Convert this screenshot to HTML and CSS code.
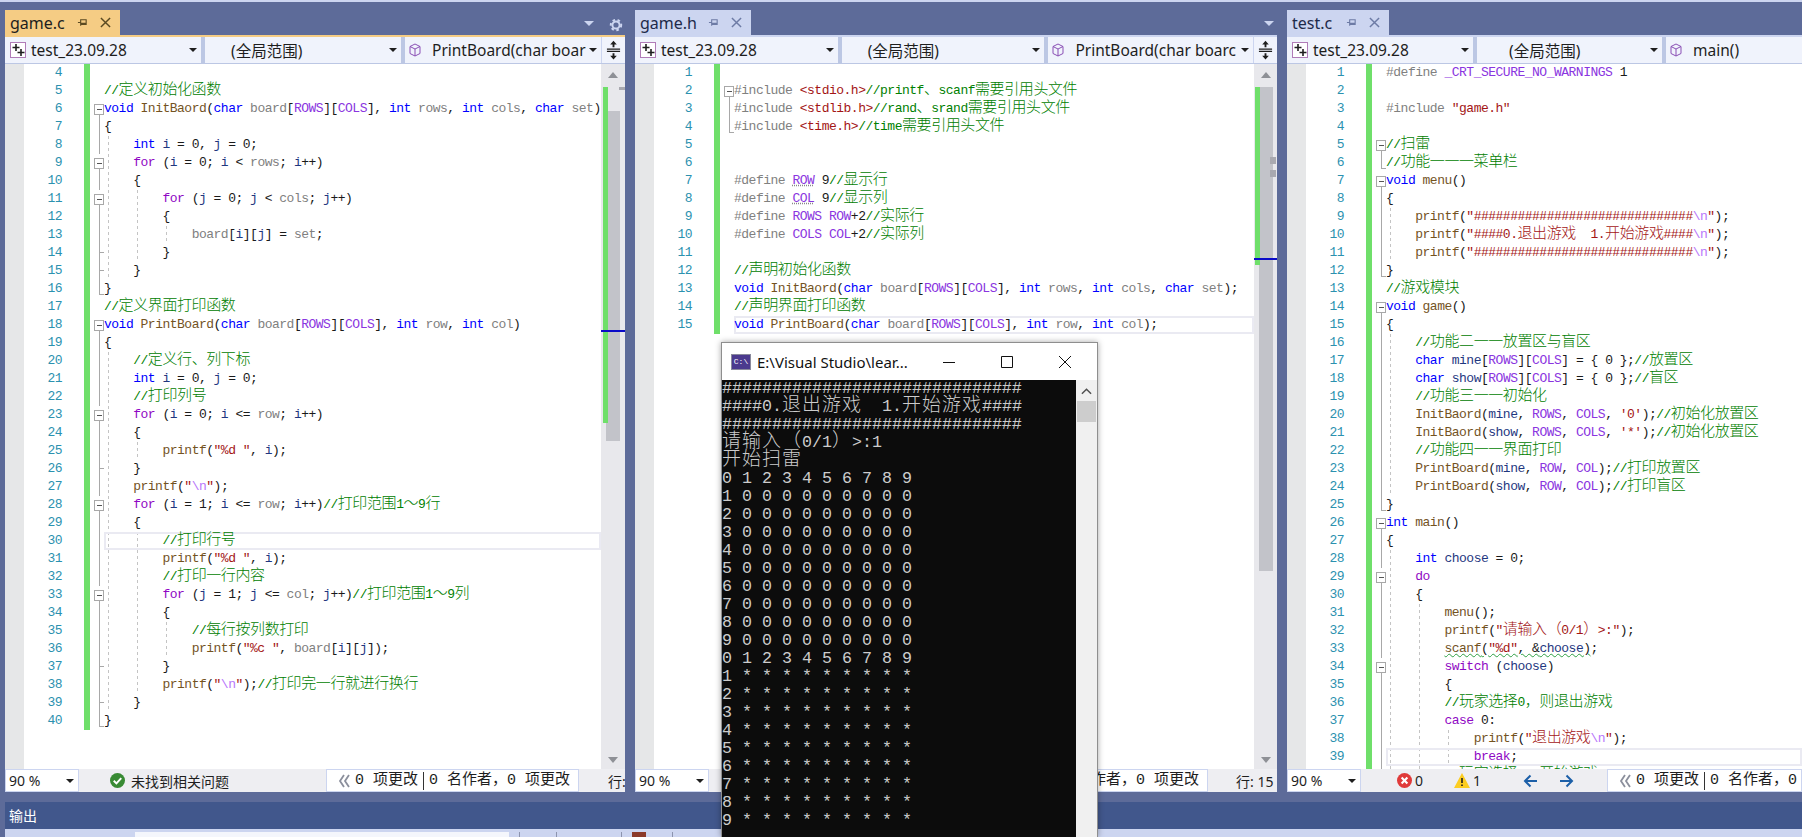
FILE: index.html
```html
<!DOCTYPE html>
<html lang="zh-CN">
<head>
  <meta charset="UTF-8" />
  <title>test_23.09.28 - Microsoft Visual Studio</title>
  <link rel="stylesheet" href="styles.css">
</head>
<body>
  <div class="top-line"></div>

  <div class="workspace">

    <!-- game.c -->
    <section class="pane pane-a">
      <div class="tabstrip">
        <div class="tab active">
          <span class="tab-name">game.c</span>
          <svg class="pin" viewBox="0 0 12 12"><path d="M1 6h3M4 2.5v7M4 3h6v5H4M4 7h6" /></svg>
          <svg class="close" viewBox="0 0 12 12"><path d="M1 1l10 10M11 1L1 11" /></svg>
        </div>
        <span class="strip-drop"></span>
        <svg class="gear" viewBox="0 0 14 14"><circle cx="7" cy="7" r="3.6" /><circle class="teeth" cx="7" cy="7" r="5.2" /></svg>
      </div>
      <div class="navbar">
        <div class="combo combo-a">
          <svg class="proj" viewBox="0 0 16 16"><rect x="0.5" y="0.5" width="15" height="15" /><path d="M6 2v7M2.5 5.5h7M11 7v7M7.5 10.500h7" /></svg>
          <span>test_23.09.28</span><i class="drop"></i>
        </div>
        <div class="combo combo-b"><span>(全局范围)</span><i class="drop"></i></div>
        <div class="combo combo-c">
          <svg class="cube" viewBox="0 0 14 14"><path d="M7 1l5 2.5v7L7 13l-5-2.5v-7zM2 3.5L7 6l5-2.5M7 6v7" /></svg>
          <span>PrintBoard(char boar</span><i class="drop"></i>
        </div>
        <div class="split">
          <svg viewBox="0 0 16 20"><path class="rule" d="M1 9h14M1 11.500h14" /><path d="M8 0l3.500 4h-2.500v3h-2V4H4.500zM8 20l3.500-4h-2.500v-2.500h-2V16H4.500z" /></svg>
        </div>
      </div>
      <div class="editor">
        <div class="lines">
          <div class="row"><span class="num">4</span><span class="bar"></span><span class="fold"></span><code class="code"></code></div>
          <div class="row"><span class="num">5</span><span class="bar"></span><span class="fold"></span><code class="code"><span class="c">//<i class="h">定义初始化函数</i></span></code></div>
          <div class="row"><span class="num">6</span><span class="bar"></span><span class="fold open"></span><code class="code"><span class="k">void</span> <span class="f">InitBaord</span>(<span class="k">char</span> <span class="a">board</span>[<span class="m">ROWS</span>][<span class="m">COLS</span>], <span class="k">int</span> <span class="a">rows</span>, <span class="k">int</span> <span class="a">cols</span>, <span class="k">char</span> <span class="a">set</span>)</code></div>
          <div class="row"><span class="num">7</span><span class="bar"></span><span class="fold line"></span><code class="code">{</code></div>
          <div class="row"><span class="num">8</span><span class="bar"></span><span class="fold line"></span><code class="code g1">    <span class="k">int</span> <span class="v">i</span> = 0, <span class="v">j</span> = 0;</code></div>
          <div class="row"><span class="num">9</span><span class="bar"></span><span class="fold open"></span><code class="code g1">    <span class="q">for</span> (<span class="v">i</span> = 0; <span class="v">i</span> &lt; <span class="a">rows</span>; <span class="v">i</span>++)</code></div>
          <div class="row"><span class="num">10</span><span class="bar"></span><span class="fold line"></span><code class="code g1">    {</code></div>
          <div class="row"><span class="num">11</span><span class="bar"></span><span class="fold open"></span><code class="code g2">        <span class="q">for</span> (<span class="v">j</span> = 0; <span class="v">j</span> &lt; <span class="a">cols</span>; <span class="v">j</span>++)</code></div>
          <div class="row"><span class="num">12</span><span class="bar"></span><span class="fold line"></span><code class="code g2">        {</code></div>
          <div class="row"><span class="num">13</span><span class="bar"></span><span class="fold line"></span><code class="code g3">            <span class="a">board</span>[<span class="v">i</span>][<span class="v">j</span>] = <span class="a">set</span>;</code></div>
          <div class="row"><span class="num">14</span><span class="bar"></span><span class="fold tick"></span><code class="code g2">        }</code></div>
          <div class="row"><span class="num">15</span><span class="bar"></span><span class="fold tick"></span><code class="code g1">    }</code></div>
          <div class="row"><span class="num">16</span><span class="bar"></span><span class="fold end"></span><code class="code">}</code></div>
          <div class="row"><span class="num">17</span><span class="bar"></span><span class="fold"></span><code class="code"><span class="c">//<i class="h">定义界面打印函数</i></span></code></div>
          <div class="row"><span class="num">18</span><span class="bar"></span><span class="fold open"></span><code class="code"><span class="k">void</span> <span class="f">PrintBoard</span>(<span class="k">char</span> <span class="a">board</span>[<span class="m">ROWS</span>][<span class="m">COLS</span>], <span class="k">int</span> <span class="a">row</span>, <span class="k">int</span> <span class="a">col</span>)</code></div>
          <div class="row"><span class="num">19</span><span class="bar"></span><span class="fold line"></span><code class="code">{</code></div>
          <div class="row"><span class="num">20</span><span class="bar"></span><span class="fold line"></span><code class="code g1">    <span class="c">//<i class="h">定义行、列下标</i></span></code></div>
          <div class="row"><span class="num">21</span><span class="bar"></span><span class="fold line"></span><code class="code g1">    <span class="k">int</span> <span class="v">i</span> = 0, <span class="v">j</span> = 0;</code></div>
          <div class="row"><span class="num">22</span><span class="bar"></span><span class="fold line"></span><code class="code g1">    <span class="c">//<i class="h">打印列号</i></span></code></div>
          <div class="row"><span class="num">23</span><span class="bar"></span><span class="fold open"></span><code class="code g1">    <span class="q">for</span> (<span class="v">i</span> = 0; <span class="v">i</span> &lt;= <span class="a">row</span>; <span class="v">i</span>++)</code></div>
          <div class="row"><span class="num">24</span><span class="bar"></span><span class="fold line"></span><code class="code g1">    {</code></div>
          <div class="row"><span class="num">25</span><span class="bar"></span><span class="fold line"></span><code class="code g2">        <span class="f">printf</span>(<span class="s">"%d "</span>, <span class="v">i</span>);</code></div>
          <div class="row"><span class="num">26</span><span class="bar"></span><span class="fold tick"></span><code class="code g1">    }</code></div>
          <div class="row"><span class="num">27</span><span class="bar"></span><span class="fold line"></span><code class="code g1">    <span class="f">printf</span>(<span class="s">"</span><span class="e">\n</span><span class="s">"</span>);</code></div>
          <div class="row"><span class="num">28</span><span class="bar"></span><span class="fold open"></span><code class="code g1">    <span class="q">for</span> (<span class="v">i</span> = 1; <span class="v">i</span> &lt;= <span class="a">row</span>; <span class="v">i</span>++)<span class="c">//<i class="h">打印范围</i>1<i class="h">～</i>9<i class="h">行</i></span></code></div>
          <div class="row"><span class="num">29</span><span class="bar"></span><span class="fold line"></span><code class="code g1">    {</code></div>
          <div class="row"><span class="num">30</span><span class="bar"></span><span class="fold line"></span><code class="code g2 cur">        <span class="c">//<i class="h">打印行号</i></span></code></div>
          <div class="row"><span class="num">31</span><span class="bar"></span><span class="fold line"></span><code class="code g2">        <span class="f">printf</span>(<span class="s">"%d "</span>, <span class="v">i</span>);</code></div>
          <div class="row"><span class="num">32</span><span class="bar"></span><span class="fold line"></span><code class="code g2">        <span class="c">//<i class="h">打印一行内容</i></span></code></div>
          <div class="row"><span class="num">33</span><span class="bar"></span><span class="fold open"></span><code class="code g2">        <span class="q">for</span> (<span class="v">j</span> = 1; <span class="v">j</span> &lt;= <span class="a">col</span>; <span class="v">j</span>++)<span class="c">//<i class="h">打印范围</i>1<i class="h">～</i>9<i class="h">列</i></span></code></div>
          <div class="row"><span class="num">34</span><span class="bar"></span><span class="fold line"></span><code class="code g2">        {</code></div>
          <div class="row"><span class="num">35</span><span class="bar"></span><span class="fold line"></span><code class="code g3">            <span class="c">//<i class="h">每行按列数打印</i></span></code></div>
          <div class="row"><span class="num">36</span><span class="bar"></span><span class="fold line"></span><code class="code g3">            <span class="f">printf</span>(<span class="s">"%c "</span>, <span class="a">board</span>[<span class="v">i</span>][<span class="v">j</span>]);</code></div>
          <div class="row"><span class="num">37</span><span class="bar"></span><span class="fold tick"></span><code class="code g2">        }</code></div>
          <div class="row"><span class="num">38</span><span class="bar"></span><span class="fold line"></span><code class="code g2">        <span class="f">printf</span>(<span class="s">"</span><span class="e">\n</span><span class="s">"</span>);<span class="c">//<i class="h">打印完一行就进行换行</i></span></code></div>
          <div class="row"><span class="num">39</span><span class="bar"></span><span class="fold tick"></span><code class="code g1">    }</code></div>
          <div class="row"><span class="num">40</span><span class="bar"></span><span class="fold end"></span><code class="code">}</code></div>
        </div>
        <div class="sbar">
          <i class="arrow-up"></i>
          <div class="track"><div class="thumb thumb-a"></div></div>
          <i class="arrow-down"></i>
          <span class="map map-a"></span>
          <span class="caret caret-a"></span>
          <span class="mark mark-a"></span>
        </div>
      </div>
      <div class="status">
        <div class="zoom-box">90 %<i class="drop"></i></div>
        <svg class="st-check" viewBox="0 0 14 14"><circle cx="7" cy="7" r="7" /><path d="M3.5 7.200l2.500 2.500 4.500-5" /></svg>
        <span class="st-msg">未找到相关问题</span>
        <div class="changes changes-a"><svg class="chev" viewBox="0 0 12 14"><path d="M6 1L2 7l4 6M11 1L7 7l4 6" /></svg><span>0 项更改</span><b></b><span>0 名作者，0 项更改</span></div>
        <span class="st-line st-line-a">行: 15</span>
      </div>
    </section>

    <!-- game.h -->
    <section class="pane pane-b">
      <div class="tabstrip">
        <div class="tab">
          <span class="tab-name">game.h</span>
          <svg class="pin" viewBox="0 0 12 12"><path d="M1 6h3M4 2.5v7M4 3h6v5H4M4 7h6" /></svg>
          <svg class="close" viewBox="0 0 12 12"><path d="M1 1l10 10M11 1L1 11" /></svg>
        </div>
        <span class="strip-drop"></span>
      </div>
      <div class="navbar">
        <div class="combo combo-d">
          <svg class="proj" viewBox="0 0 16 16"><rect x="0.5" y="0.5" width="15" height="15" /><path d="M6 2v7M2.5 5.5h7M11 7v7M7.5 10.500h7" /></svg>
          <span>test_23.09.28</span><i class="drop"></i>
        </div>
        <div class="combo combo-e"><span>(全局范围)</span><i class="drop"></i></div>
        <div class="combo combo-f">
          <svg class="cube" viewBox="0 0 14 14"><path d="M7 1l5 2.5v7L7 13l-5-2.5v-7zM2 3.5L7 6l5-2.5M7 6v7" /></svg>
          <span class="clip">PrintBoard(char boarc</span><i class="drop"></i>
        </div>
        <div class="split">
          <svg viewBox="0 0 16 20"><path class="rule" d="M1 9h14M1 11.500h14" /><path d="M8 0l3.500 4h-2.500v3h-2V4H4.500zM8 20l3.500-4h-2.500v-2.500h-2V16H4.500z" /></svg>
        </div>
      </div>
      <div class="editor">
        <div class="lines">
          <div class="row"><span class="num">1</span><span class="bar"></span><span class="fold"></span><code class="code"></code></div>
          <div class="row"><span class="num">2</span><span class="bar"></span><span class="fold open"></span><code class="code"><span class="p">#include</span> <span class="s">&lt;stdio.h&gt;</span><span class="c">//printf<i class="h">、</i>scanf<i class="h">需要引用头文件</i></span></code></div>
          <div class="row"><span class="num">3</span><span class="bar"></span><span class="fold line"></span><code class="code"><span class="p">#include</span> <span class="s">&lt;stdlib.h&gt;</span><span class="c">//rand<i class="h">、</i>srand<i class="h">需要引用头文件</i></span></code></div>
          <div class="row"><span class="num">4</span><span class="bar"></span><span class="fold end"></span><code class="code"><span class="p">#include</span> <span class="s">&lt;time.h&gt;</span><span class="c">//time<i class="h">需要引用头文件</i></span></code></div>
          <div class="row"><span class="num">5</span><span class="bar"></span><span class="fold"></span><code class="code"></code></div>
          <div class="row"><span class="num">6</span><span class="bar"></span><span class="fold"></span><code class="code"></code></div>
          <div class="row"><span class="num">7</span><span class="bar"></span><span class="fold"></span><code class="code"><span class="p">#define</span> <span class="m d">ROW</span> 9<span class="c">//<i class="h">显示行</i></span></code></div>
          <div class="row"><span class="num">8</span><span class="bar"></span><span class="fold"></span><code class="code"><span class="p">#define</span> <span class="m d">COL</span> 9<span class="c">//<i class="h">显示列</i></span></code></div>
          <div class="row"><span class="num">9</span><span class="bar"></span><span class="fold"></span><code class="code"><span class="p">#define</span> <span class="m">ROWS</span> <span class="m">ROW</span>+2<span class="c">//<i class="h">实际行</i></span></code></div>
          <div class="row"><span class="num">10</span><span class="bar"></span><span class="fold"></span><code class="code"><span class="p">#define</span> <span class="m">COLS</span> <span class="m">COL</span>+2<span class="c">//<i class="h">实际列</i></span></code></div>
          <div class="row"><span class="num">11</span><span class="bar"></span><span class="fold"></span><code class="code"></code></div>
          <div class="row"><span class="num">12</span><span class="bar"></span><span class="fold"></span><code class="code"><span class="c">//<i class="h">声明初始化函数</i></span></code></div>
          <div class="row"><span class="num">13</span><span class="bar"></span><span class="fold"></span><code class="code"><span class="k">void</span> <span class="f">InitBaord</span>(<span class="k">char</span> <span class="a">board</span>[<span class="m">ROWS</span>][<span class="m">COLS</span>], <span class="k">int</span> <span class="a">rows</span>, <span class="k">int</span> <span class="a">cols</span>, <span class="k">char</span> <span class="a">set</span>);</code></div>
          <div class="row"><span class="num">14</span><span class="bar"></span><span class="fold"></span><code class="code"><span class="c">//<i class="h">声明界面打印函数</i></span></code></div>
          <div class="row"><span class="num">15</span><span class="bar"></span><span class="fold"></span><code class="code cur"><span class="k">void</span> <span class="f">PrintBoard</span>(<span class="k">char</span> <span class="a">board</span>[<span class="m">ROWS</span>][<span class="m">COLS</span>], <span class="k">int</span> <span class="a">row</span>, <span class="k">int</span> <span class="a">col</span>);</code></div>
        </div>
        <div class="sbar">
          <i class="arrow-up"></i>
          <div class="track"><div class="thumb thumb-b"></div></div>
          <i class="arrow-down"></i>
          <span class="map map-b"></span>
          <span class="caret caret-b"></span>
          <span class="mark mark-b"></span>
          <span class="mark mark-c"></span>
        </div>
      </div>
      <div class="status">
        <div class="zoom-box">90 %<i class="drop"></i></div>
        <div class="changes changes-b"><svg class="chev" viewBox="0 0 12 14"><path d="M6 1L2 7l4 6M11 1L7 7l4 6" /></svg><span>0 项更改</span><b></b><span>0 名作者，0 项更改</span></div>
        <span class="st-line st-line-b">行: 15</span>
      </div>
    </section>

    <!-- test.c -->
    <section class="pane pane-c">
      <div class="tabstrip">
        <div class="tab">
          <span class="tab-name">test.c</span>
          <svg class="pin" viewBox="0 0 12 12"><path d="M1 6h3M4 2.5v7M4 3h6v5H4M4 7h6" /></svg>
          <svg class="close" viewBox="0 0 12 12"><path d="M1 1l10 10M11 1L1 11" /></svg>
        </div>
      </div>
      <div class="navbar">
        <div class="combo combo-g">
          <svg class="proj" viewBox="0 0 16 16"><rect x="0.5" y="0.5" width="15" height="15" /><path d="M6 2v7M2.5 5.5h7M11 7v7M7.5 10.500h7" /></svg>
          <span>test_23.09.28</span><i class="drop"></i>
        </div>
        <div class="combo combo-h"><span>(全局范围)</span><i class="drop"></i></div>
        <div class="combo combo-i">
          <svg class="cube" viewBox="0 0 14 14"><path d="M7 1l5 2.5v7L7 13l-5-2.5v-7zM2 3.5L7 6l5-2.5M7 6v7" /></svg>
          <span>main()</span>
        </div>
      </div>
      <div class="editor">
        <div class="lines">
          <div class="row"><span class="num">1</span><span class="bar"></span><span class="fold"></span><code class="code"><span class="p">#define</span> <span class="m">_CRT_SECURE_NO_WARNINGS</span> 1</code></div>
          <div class="row"><span class="num">2</span><span class="bar"></span><span class="fold"></span><code class="code"></code></div>
          <div class="row"><span class="num">3</span><span class="bar"></span><span class="fold"></span><code class="code"><span class="p">#include</span> <span class="s">"game.h"</span></code></div>
          <div class="row"><span class="num">4</span><span class="bar"></span><span class="fold"></span><code class="code"></code></div>
          <div class="row"><span class="num">5</span><span class="bar"></span><span class="fold open"></span><code class="code"><span class="c">//<i class="h">扫雷</i></span></code></div>
          <div class="row"><span class="num">6</span><span class="bar"></span><span class="fold end"></span><code class="code"><span class="c">//<i class="h">功能一一一菜单栏</i></span></code></div>
          <div class="row"><span class="num">7</span><span class="bar"></span><span class="fold open"></span><code class="code"><span class="k">void</span> <span class="f">menu</span>()</code></div>
          <div class="row"><span class="num">8</span><span class="bar"></span><span class="fold line"></span><code class="code">{</code></div>
          <div class="row"><span class="num">9</span><span class="bar"></span><span class="fold line"></span><code class="code g1">    <span class="f">printf</span>(<span class="s">"##############################</span><span class="e">\n</span><span class="s">"</span>);</code></div>
          <div class="row"><span class="num">10</span><span class="bar"></span><span class="fold line"></span><code class="code g1">    <span class="f">printf</span>(<span class="s">"####0.<i class="h">退出游戏</i>  1.<i class="h">开始游戏</i>####</span><span class="e">\n</span><span class="s">"</span>);</code></div>
          <div class="row"><span class="num">11</span><span class="bar"></span><span class="fold line"></span><code class="code g1">    <span class="f">printf</span>(<span class="s">"##############################</span><span class="e">\n</span><span class="s">"</span>);</code></div>
          <div class="row"><span class="num">12</span><span class="bar"></span><span class="fold end"></span><code class="code">}</code></div>
          <div class="row"><span class="num">13</span><span class="bar"></span><span class="fold"></span><code class="code"><span class="c">//<i class="h">游戏模块</i></span></code></div>
          <div class="row"><span class="num">14</span><span class="bar"></span><span class="fold open"></span><code class="code"><span class="k">void</span> <span class="f">game</span>()</code></div>
          <div class="row"><span class="num">15</span><span class="bar"></span><span class="fold line"></span><code class="code">{</code></div>
          <div class="row"><span class="num">16</span><span class="bar"></span><span class="fold line"></span><code class="code g1">    <span class="c">//<i class="h">功能二一一放置区与盲区</i></span></code></div>
          <div class="row"><span class="num">17</span><span class="bar"></span><span class="fold line"></span><code class="code g1">    <span class="k">char</span> <span class="v">mine</span>[<span class="m">ROWS</span>][<span class="m">COLS</span>] = { 0 };<span class="c">//<i class="h">放置区</i></span></code></div>
          <div class="row"><span class="num">18</span><span class="bar"></span><span class="fold line"></span><code class="code g1">    <span class="k">char</span> <span class="v">show</span>[<span class="m">ROWS</span>][<span class="m">COLS</span>] = { 0 };<span class="c">//<i class="h">盲区</i></span></code></div>
          <div class="row"><span class="num">19</span><span class="bar"></span><span class="fold line"></span><code class="code g1">    <span class="c">//<i class="h">功能三一一初始化</i></span></code></div>
          <div class="row"><span class="num">20</span><span class="bar"></span><span class="fold line"></span><code class="code g1">    <span class="f">InitBaord</span>(<span class="v">mine</span>, <span class="m">ROWS</span>, <span class="m">COLS</span>, <span class="s">'0'</span>);<span class="c">//<i class="h">初始化放置区</i></span></code></div>
          <div class="row"><span class="num">21</span><span class="bar"></span><span class="fold line"></span><code class="code g1">    <span class="f">InitBaord</span>(<span class="v">show</span>, <span class="m">ROWS</span>, <span class="m">COLS</span>, <span class="s">'*'</span>);<span class="c">//<i class="h">初始化放置区</i></span></code></div>
          <div class="row"><span class="num">22</span><span class="bar"></span><span class="fold line"></span><code class="code g1">    <span class="c">//<i class="h">功能四一一界面打印</i></span></code></div>
          <div class="row"><span class="num">23</span><span class="bar"></span><span class="fold line"></span><code class="code g1">    <span class="f">PrintBoard</span>(<span class="v">mine</span>, <span class="m">ROW</span>, <span class="m">COL</span>);<span class="c">//<i class="h">打印放置区</i></span></code></div>
          <div class="row"><span class="num">24</span><span class="bar"></span><span class="fold line"></span><code class="code g1">    <span class="f">PrintBoard</span>(<span class="v">show</span>, <span class="m">ROW</span>, <span class="m">COL</span>);<span class="c">//<i class="h">打印盲区</i></span></code></div>
          <div class="row"><span class="num">25</span><span class="bar"></span><span class="fold end"></span><code class="code">}</code></div>
          <div class="row"><span class="num">26</span><span class="bar"></span><span class="fold open"></span><code class="code"><span class="k">int</span> <span class="f">main</span>()</code></div>
          <div class="row"><span class="num">27</span><span class="bar"></span><span class="fold line"></span><code class="code">{</code></div>
          <div class="row"><span class="num">28</span><span class="bar"></span><span class="fold line"></span><code class="code g1">    <span class="k">int</span> <span class="v">choose</span> = 0;</code></div>
          <div class="row"><span class="num">29</span><span class="bar"></span><span class="fold open"></span><code class="code g1">    <span class="q">do</span></code></div>
          <div class="row"><span class="num">30</span><span class="bar"></span><span class="fold line"></span><code class="code g1">    {</code></div>
          <div class="row"><span class="num">31</span><span class="bar"></span><span class="fold line"></span><code class="code g2">        <span class="f">menu</span>();</code></div>
          <div class="row"><span class="num">32</span><span class="bar"></span><span class="fold line"></span><code class="code g2">        <span class="f">printf</span>(<span class="s">"<i class="h">请输入（</i>0/1<i class="h">）</i>&gt;:"</span>);</code></div>
          <div class="row"><span class="num">33</span><span class="bar"></span><span class="fold line"></span><code class="code g2">        <span class="w"><span class="f">scanf</span>(<span class="s">"%d"</span>, &amp;<span class="v">choose</span>)</span>;</code></div>
          <div class="row"><span class="num">34</span><span class="bar"></span><span class="fold open"></span><code class="code g2">        <span class="q">switch</span> (<span class="v">choose</span>)</code></div>
          <div class="row"><span class="num">35</span><span class="bar"></span><span class="fold line"></span><code class="code g2">        {</code></div>
          <div class="row"><span class="num">36</span><span class="bar"></span><span class="fold line"></span><code class="code g2">        <span class="c">//<i class="h">玩家选择</i>0<i class="h">，则退出游戏</i></span></code></div>
          <div class="row"><span class="num">37</span><span class="bar"></span><span class="fold line"></span><code class="code g2">        <span class="q">case</span> 0:</code></div>
          <div class="row"><span class="num">38</span><span class="bar"></span><span class="fold line"></span><code class="code g3">            <span class="f">printf</span>(<span class="s">"<i class="h">退出游戏</i></span><span class="e">\n</span><span class="s">"</span>);</code></div>
          <div class="row"><span class="num">39</span><span class="bar"></span><span class="fold line"></span><code class="code g3 cur">            <span class="q">break</span>;</code></div>
          <div class="row"><span class="num"></span><span class="bar"></span><span class="fold line"></span><code class="code g2">        <span class="c">//<i class="h">玩家选择</i>1<i class="h">，开始游戏</i></span></code></div>
        </div>
      </div>
      <div class="status">
        <div class="zoom-box">90 %<i class="drop"></i></div>
        <svg class="st-err" viewBox="0 0 14 14"><circle cx="7" cy="7" r="7" /><path d="M4.300 4.300l5.400 5.400M9.700 4.300L4.300 9.700" /></svg>
        <span class="st-count">0</span>
        <svg class="st-warn" viewBox="0 0 16 15"><path class="tri" d="M8 0l8 15H0z" /><path class="ex" d="M8 5v5M8 11.500v1.500" /></svg>
        <span class="st-count">1</span>
        <svg class="st-nav st-back" viewBox="0 0 15 14"><path d="M14 7H2M7.500 1.500L2 7l5.500 5.500" /></svg>
        <svg class="st-nav st-next" viewBox="0 0 15 14"><path d="M1 7h12M7.500 1.500L13 7l-5.500 5.500" /></svg>
        <div class="changes changes-c"><svg class="chev" viewBox="0 0 12 14"><path d="M6 1L2 7l4 6M11 1L7 7l4 6" /></svg><span>0 项更改</span><b></b><span>0 名作者，0</span></div>
      </div>
    </section>
  </div>

  <div class="output-head">输出</div>
  <div class="output-bar">
    <div class="output-input"></div>
    <i class="sep"></i><i class="sep"></i><i class="sep"></i><i class="clear-icon"></i><i class="sep"></i>
  </div>

  <!-- console window on top of the IDE -->
  <div class="console">
    <div class="con-title">
      <span class="con-icon">C:\</span>
      <span class="con-name">E:\Visual Studio\lear...</span>
      <svg class="con-btn con-min" viewBox="0 0 12 12"><path d="M0 6.500h12" /></svg>
      <svg class="con-btn con-max" viewBox="0 0 12 12"><path d="M.5.5h11v11H.5z" /></svg>
      <svg class="con-btn con-close" viewBox="0 0 12 12"><path d="M0 0l12 12M12 0L0 12" /></svg>
    </div>
    <div class="con-body">
      <pre class="con-text">##############################
####0.<i class="h">退出游戏</i>  1.<i class="h">开始游戏</i>####
##############################
<i class="h">请输入（</i>0/1<i class="h">）</i>&gt;:1
<i class="h">开始扫雷</i>
0 1 2 3 4 5 6 7 8 9
1 0 0 0 0 0 0 0 0 0
2 0 0 0 0 0 0 0 0 0
3 0 0 0 0 0 0 0 0 0
4 0 0 0 0 0 0 0 0 0
5 0 0 0 0 0 0 0 0 0
6 0 0 0 0 0 0 0 0 0
7 0 0 0 0 0 0 0 0 0
8 0 0 0 0 0 0 0 0 0
9 0 0 0 0 0 0 0 0 0
0 1 2 3 4 5 6 7 8 9
1 * * * * * * * * *
2 * * * * * * * * *
3 * * * * * * * * *
4 * * * * * * * * *
5 * * * * * * * * *
6 * * * * * * * * *
7 * * * * * * * * *
8 * * * * * * * * *
9 * * * * * * * * *</pre>
      <div class="con-scroll">
        <svg class="con-up" viewBox="0 0 12 8"><path d="M1 7l5-5 5 5" /></svg>
        <div class="con-thumb"></div>
      </div>
    </div>
  </div>
</body>
</html>
```

FILE: styles.css
```css
:root {
  --frame: #5d6b99;
  --light: #ccd5f0;
  --combo: #f0f3fc;
  --gutter: #e6e7e8;
  --change: #6fdf6a;
  --track: #e8e8ec;
}

* {
  box-sizing: border-box;
}

html,
body {
  margin: 0;
  height: 837px;
  overflow: hidden;
}

body {
  width: 1802px;
  position: relative;
  background: var(--frame);
  font-family: "Noto Sans", "Noto Sans CJK SC", sans-serif;
  color: #1e1e1e;
}

.top-line {
  height: 2px;
  background: var(--light);
}

.workspace {
  display: flex;
  gap: 10px;
  height: 790px;
  padding-left: 5px;
}

.pane {
  display: flex;
  flex-direction: column;
  overflow: hidden;
}

.pane-a {
  width: 620px;
}

.pane-b {
  width: 642px;
}

.pane-c {
  width: 515px;
}

/* tabs */
.tabstrip {
  height: 35px;
  padding-top: 8px;
  display: flex;
  align-items: flex-start;
  border-bottom: 2px solid var(--light);
  flex: none;
}

.pane-a .tabstrip {
  border-bottom-color: #f5cc84;
}

.tab {
  height: 25px;
  display: flex;
  align-items: center;
  background: var(--light);
  padding-left: 5px;
  color: #1e2a4a;
}

.tab.active {
  background: #f5cc84;
  color: #1e1e1e;
  width: 115px;
}

.pane-b .tab {
  width: 116px;
}

.pane-c .tab {
  width: 102px;
}

.tab-name {
  font-size: 16px;
  width: 67px;
}

.pane-b .tab-name {
  width: 68px;
}

.pane-c .tab-name {
  width: 54px;
}

.pin,
.close {
  width: 11px;
  height: 11px;
  fill: none;
  stroke: #6d7ba5;
  stroke-width: 1.2;
}

.close {
  margin-left: 12px;
  stroke-width: 1.6;
}

.tab.active .pin,
.tab.active .close {
  stroke: #5b4a22;
}

.strip-drop {
  margin: 11px 0 0 auto;
  border-style: solid;
  border-width: 5px 5px 0;
  border-color: var(--light) transparent transparent;
}

.pane-a .strip-drop {
  margin-right: 15px;
}

.pane-b .strip-drop {
  margin-right: 3px;
}

.gear {
  width: 14px;
  height: 14px;
  margin: 8px 2px 0 0;
  fill: none;
  stroke: var(--light);
  stroke-width: 2;
}

.gear .teeth {
  stroke-dasharray: 2.5 2.6;
  stroke-width: 2;
}

/* navigation bar */
.navbar {
  height: 27px;
  flex: none;
  display: flex;
  gap: 4px;
  background: #bcc7e4;
  padding-bottom: 1px;
}

.combo {
  display: flex;
  align-items: center;
  background: var(--combo);
  font-size: 15.5px;
  position: relative;
  white-space: nowrap;
  overflow: hidden;
}

.combo-a {
  width: 196px;
}

.combo-b {
  width: 196px;
  padding-left: 26px;
}

.combo-c {
  width: 196px;
}

.combo-d {
  width: 203px;
}

.combo-e {
  width: 203px;
  padding-left: 26px;
}

.combo-f {
  width: 205px;
}

.combo-g {
  width: 186px;
}

.combo-h {
  width: 185px;
  padding-left: 32px;
}

.combo-i {
  flex: 1;
}

.combo-c,
.combo-f {
  margin-right: -4px;
}

.clip {
  width: 162px;
  overflow: hidden;
}

.proj {
  width: 16px;
  height: 16px;
  margin: 0 5px;
  flex: none;
  fill: #fff;
  stroke: #1e1e1e;
}

.proj rect {
  stroke: #b07cb8;
}

.proj path {
  stroke-width: 1.6;
}

.cube {
  width: 14px;
  height: 14px;
  margin: 0 10px 0 3px;
  flex: none;
  fill: none;
  stroke: #8a4fb5;
}

.drop {
  margin-left: auto;
  margin-right: 4px;
  flex: none;
  border-style: solid;
  border-width: 4px 4px 0;
  border-color: #1e1e1e transparent transparent;
}

.split {
  width: 24px;
  display: flex;
  align-items: center;
  justify-content: center;
  background: var(--combo);
  border-left: 1px solid var(--light);
}

.split svg {
  width: 15px;
  height: 20px;
  fill: #1e1e1e;
}

.split .rule {
  fill: none;
  stroke: #1e1e1e;
  stroke-width: 1.3;
}

/* editor */
.editor {
  flex: 1;
  min-height: 0;
  display: flex;
  background: #fff;
  overflow: hidden;
  border-left: 19px solid var(--gutter);
}

.lines {
  flex: 1;
  min-width: 0;
  overflow: hidden;
}

.row {
  display: flex;
  height: 18px;
  line-height: 18px;
}

.num {
  width: 60px;
  flex: none;
  padding-right: 22px;
  text-align: right;
  color: #2b91af;
  font: 13px/18px "Liberation Mono", monospace;
  letter-spacing: -.5px;
}

.bar {
  width: 6px;
  flex: none;
  background: var(--change);
}

.fold {
  width: 14px;
  flex: none;
  display: flex;
  align-items: center;
  --fl: #a8a8a8;
}

.fold.line {
  background: linear-gradient(var(--fl), var(--fl)) 9px 0 / 1px 100% no-repeat;
}

.fold.tick {
  background:
    linear-gradient(var(--fl), var(--fl)) 9px 0 / 1px 100% no-repeat,
    linear-gradient(var(--fl), var(--fl)) 9px 8px / 5px 1px no-repeat;
}

.fold.end {
  background:
    linear-gradient(var(--fl), var(--fl)) 9px 0 / 1px 15px no-repeat,
    linear-gradient(var(--fl), var(--fl)) 9px 14px / 5px 1px no-repeat;
}

.fold.open {
  background: linear-gradient(var(--fl), var(--fl)) 9px 13px / 1px 5px no-repeat;
}

.fold.open::before {
  content: "";
  width: 9px;
  height: 9px;
  margin-left: 4px;
  border: 1px solid var(--fl);
  background: linear-gradient(#555, #555) center / 5px 1px no-repeat, #fff;
}

.code {
  flex: 1;
  min-width: 0;
  display: block;
  white-space: pre;
  font: 13px/18px "Liberation Mono", monospace;
  letter-spacing: -.5px;
  color: #1a1a1a;
  --dash: repeating-linear-gradient(#c4c4c4 0 3px, transparent 3px 6px);
}

.code.g1 {
  background: var(--dash) 4px 0 / 1px 100% no-repeat;
}

.code.g2 {
  background:
    var(--dash) 4px 0 / 1px 100% no-repeat,
    var(--dash) 33px 0 / 1px 100% no-repeat;
}

.code.g3 {
  background:
    var(--dash) 4px 0 / 1px 100% no-repeat,
    var(--dash) 33px 0 / 1px 100% no-repeat,
    var(--dash) 62px 0 / 1px 100% no-repeat;
}

.code.cur {
  box-shadow: inset 0 0 0 2px #eaeaf2;
}

/* line-height 0 keeps the bigger CJK glyphs from moving the baseline */
.h {
  font: 300 15px/0 "Noto Sans CJK SC", sans-serif;
  letter-spacing: -.4px;
}

.k {
  color: #0000ff;
}

.q {
  color: #8f08c4;
}

.m {
  color: #8a35e0;
}

.s {
  color: #a31515;
}

.c {
  color: #008000;
}

.a {
  color: #808080;
}

.v {
  color: #1f377f;
}

.f {
  color: #74531f;
}

.e {
  color: #b776fb;
}

.p {
  color: #808080;
}

.d {
  text-decoration: underline dotted #888;
}

.w {
  text-decoration: underline wavy #2ea043 1px;
}

/* scrollbar */
.sbar {
  width: 24px;
  flex: none;
  position: relative;
  display: flex;
  flex-direction: column;
  align-items: center;
  background: var(--track);
}

.pane-b .sbar {
  width: 23px;
}

.arrow-up,
.arrow-down {
  flex: none;
  border-style: solid;
  border-color: #8e9096 transparent;
  border-width: 0 5px 6px;
  margin: 8px 0 9px;
}

.arrow-down {
  border-width: 6px 5px 0;
  margin: 0 0 6px;
}

.track {
  flex: 1;
  width: 14px;
  margin-bottom: 8px;
}

.thumb {
  background: #c2c3c9;
}

.thumb-a {
  margin-top: 24px;
  height: 330px;
}

.thumb-b {
  height: 484px;
}

.map {
  position: absolute;
  top: 23px;
  width: 5px;
  background: var(--change);
}

.map-a {
  left: 2px;
  height: 336px;
}

.map-b {
  left: 1px;
  height: 178px;
}

.caret {
  position: absolute;
  left: 0;
  right: 0;
  height: 2px;
  background: #0a0ac8;
}

.caret-a {
  top: 266px;
}

.caret-b {
  top: 194px;
}

.mark {
  position: absolute;
  background: #a9a9b0;
}

.mark-a {
  left: 18px;
  top: 23px;
  width: 6px;
  height: 3px;
}

.mark-b {
  left: 16px;
  top: 93px;
  width: 6px;
  height: 7px;
}

.mark-c {
  left: 16px;
  top: 106px;
  width: 6px;
  height: 7px;
}

/* status row under each editor */
.status {
  height: 23px;
  flex: none;
  display: flex;
  align-items: center;
  background: #eeeef2;
  font-size: 14px;
  white-space: nowrap;
}

.zoom-box {
  width: 74px;
  height: 23px;
  flex: none;
  display: flex;
  align-items: center;
  padding-left: 3px;
  background: #fff;
  border: 1px solid var(--light);
  font-size: 14px;
}

.st-check {
  width: 15px;
  height: 15px;
  flex: none;
  margin-left: 31px;
  fill: #388a34;
  stroke: none;
}

.st-check path {
  fill: none;
  stroke: #fff;
  stroke-width: 1.8;
}

.st-msg {
  margin-left: 6px;
  width: 98px;
  font-size: 14px;
}

.changes {
  height: 23px;
  width: 253px;
  flex: none;
  display: flex;
  align-items: center;
  gap: 5px;
  background: #fff;
  border: 1px solid var(--light);
  padding-left: 11px;
  white-space: pre;
  font: 15px/21px "Liberation Mono", "Noto Sans CJK SC", monospace;
}

.changes b {
  width: 1px;
  height: 18px;
  background: #333;
}

.chev {
  width: 12px;
  height: 14px;
  flex: none;
  fill: none;
  stroke: #8b8f9c;
  stroke-width: 1.8;
}

.changes-a {
  margin-left: 97px;
}

.changes-b {
  margin-left: 246px;
}

.changes-c {
  margin-left: 33px;
  width: 195px;
  overflow: hidden;
}

.st-line {
  flex: none;
}

.st-line-a {
  margin-left: 29px;
}

.st-line-b {
  margin-left: 28px;
}

.st-err {
  width: 15px;
  height: 15px;
  flex: none;
  margin-left: 36px;
  fill: #e03a3a;
}

.st-err path {
  fill: none;
  stroke: #fff;
  stroke-width: 2;
}

.st-count {
  margin-left: 3px;
  width: 9px;
}

.st-warn {
  width: 16px;
  height: 15px;
  flex: none;
  margin-left: 31px;
}

.st-warn .tri {
  fill: #fccd22;
}

.st-warn .ex {
  fill: none;
  stroke: #1e1e1e;
  stroke-width: 1.6;
}

.st-nav {
  width: 15px;
  height: 14px;
  flex: none;
  fill: none;
  stroke: #1c5fa8;
  stroke-width: 2;
}

.st-back {
  margin-left: 42px;
}

.st-next {
  margin-left: 21px;
}

/* output window at the bottom */
.output-head {
  height: 27px;
  margin: 10px 0 0 5px;
  padding-left: 4px;
  background: #41578c;
  color: #fff;
  font-size: 14px;
  line-height: 27px;
}

.output-bar {
  height: 8px;
  margin-left: 5px;
  padding: 3px 0 0 130px;
  display: flex;
  gap: 36px;
  background: var(--light);
}

.output-input {
  width: 374px;
  height: 5px;
  margin-right: -26px;
  background: #f4f6fc;
}

.sep {
  width: 1px;
  height: 5px;
  background: #8c94ae;
}

.sep:nth-child(4) {
  margin-left: 28px;
}

.clear-icon {
  width: 14px;
  height: 5px;
  margin: 0 -10px 0 -26px;
  background: #8b3a2a;
}

/* console window */
.console {
  position: absolute;
  left: 721px;
  top: 342px;
  width: 377px;
  height: 495px;
  display: flex;
  flex-direction: column;
  border: 1px solid #8e8e8e;
  border-bottom: 0;
  background: #fff;
  box-shadow: 0 0 6px rgba(0, 0, 0, 0.35);
}

.con-title {
  height: 37px;
  flex: none;
  display: flex;
  align-items: center;
  padding-left: 9px;
}

.con-icon {
  width: 20px;
  height: 16px;
  background: #4b3a8e;
  border: 1px solid #8a8a9c;
  color: #fff;
  font: 8px/14px "Liberation Mono", monospace;
  text-align: center;
}

.con-name {
  margin-left: 6px;
  width: 166px;
  font-size: 15px;
  color: #111;
  white-space: nowrap;
}

.con-btn {
  width: 12px;
  height: 12px;
  fill: none;
  stroke: #111;
}

.con-min {
  margin-left: 20px;
}

.con-max {
  margin-left: 46px;
}

.con-close {
  margin-left: 46px;
}

.con-body {
  flex: 1;
  display: flex;
  min-height: 0;
  background: #0c0c0c;
}

.con-text {
  flex: 1;
  margin: 0;
  color: #cccccc;
  font: 16.67px/18px "Liberation Mono", monospace;
  overflow: hidden;
}

.con-text .h {
  font: 300 19px/0 "Noto Sans CJK SC", sans-serif;
  letter-spacing: 1px;
}

.con-scroll {
  width: 21px;
  flex: none;
  display: flex;
  flex-direction: column;
  align-items: center;
  background: #f0f0f0;
}

.con-up {
  width: 11px;
  height: 8px;
  margin: 7px 0 6px;
  fill: none;
  stroke: #505050;
  stroke-width: 1.6;
}

.con-thumb {
  width: 19px;
  height: 21px;
  background: #cdcdcd;
}
```
